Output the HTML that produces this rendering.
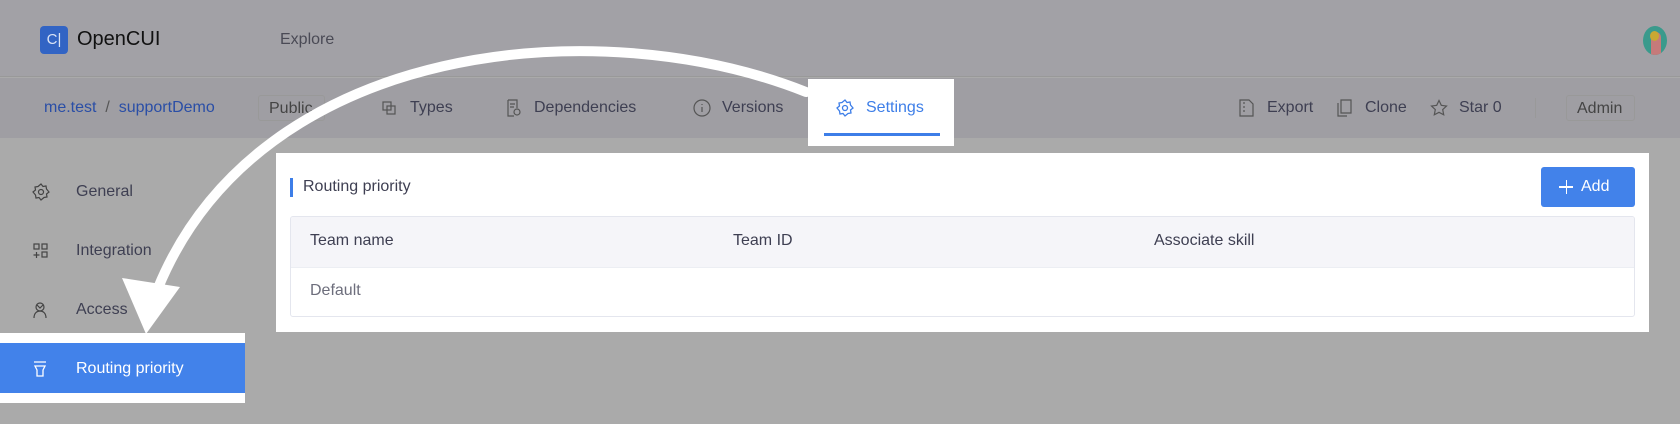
<!DOCTYPE html>
<html><head><meta charset="utf-8"><style>
*{margin:0;padding:0;box-sizing:border-box}
body{width:1680px;height:424px;overflow:hidden;background:#aaaaaa;font-family:"Liberation Sans",sans-serif;position:relative;color:#3e3f52}
.a{position:absolute;white-space:nowrap}
.top{position:absolute;left:0;top:0;width:1680px;height:77px;background:#a2a1a6;border-bottom:1px solid #999}
.sub{position:absolute;left:0;top:78px;width:1680px;height:60px;background:#9f9ea3}
.t16{font-size:16px;line-height:20px}
svg.i{position:absolute}
</style></head><body>
<div class="top"></div>
<div class="sub"></div>
<div class="a" style="left:40px;top:26px;width:28px;height:28px;background:#3264c4;border-radius:4px;color:#dbe4f5;font-size:15px;line-height:28px;text-align:center">C|</div>
<div class="a" style="left:77px;top:28px;font-size:20px;color:#111">OpenCUI</div>
<div class="a t16" style="left:280px;top:30px;color:#4a4a55">Explore</div>
<div class="a" style="left:1643px;top:26px;width:24px;height:29px;border-radius:50%;background:#3a9a8c;overflow:hidden"><div style="position:absolute;left:8px;top:6px;width:10px;height:23px;background:#c57a7a;border-radius:5px 5px 0 0"></div><div style="position:absolute;left:7px;top:5px;width:9px;height:10px;background:#c8a832;border-radius:50%"></div></div>

<div class="a t16" style="left:44px;top:98px;color:#2a4ea6">me.test &nbsp;<span style="color:#555">/</span>&nbsp; supportDemo</div>
<div class="a t16" style="left:258px;top:95px;width:67px;height:26px;border:1px solid #999;border-radius:3px;padding:3px 10px;color:#444">Public</div>
<svg class="i" style="left:381px;top:100px" width="16" height="16" viewBox="0 0 16 16" fill="none" stroke="#555" stroke-width="1.2"><rect x="2" y="2" width="8" height="8"/><rect x="6" y="6" width="8" height="8"/></svg>
<div class="a t16" style="left:410px;top:98px">Types</div>
<svg class="i" style="left:505px;top:99px" width="16" height="18" viewBox="0 0 16 18" fill="none" stroke="#555" stroke-width="1.2"><path d="M3 1h9v8M3 1v16h6M5 5h5M5 8h4"/><circle cx="12" cy="13" r="3"/></svg>
<div class="a t16" style="left:534px;top:98px">Dependencies</div>
<svg class="i" style="left:693px;top:99px" width="18" height="18" viewBox="0 0 18 18" fill="none" stroke="#555" stroke-width="1.2"><circle cx="9" cy="9" r="8"/><path d="M9 8v5M9 5v1"/></svg>
<div class="a t16" style="left:722px;top:98px">Versions</div>

<div class="a" style="left:808px;top:79px;width:146px;height:67px;background:#fff"></div>
<div class="a" style="left:824px;top:133px;width:116px;height:3px;background:#3d7ee8"></div>
<svg class="i" style="left:836px;top:99px" width="18" height="18" viewBox="0 0 18 18" fill="none" stroke="#3d7ee8" stroke-width="1.3"><path d="M9 1l2 2.5 3-.5.5 3L17 9l-2.5 2 .5 3-3 .5L9 17l-2-2.5-3 .5-.5-3L1 9l2.5-2L3 4l3-.5z"/><circle cx="9" cy="9" r="2.5"/></svg>
<div class="a t16" style="left:866px;top:98px;color:#3d7ee8">Settings</div>

<svg class="i" style="left:1239px;top:99px" width="15" height="18" viewBox="0 0 15 18" fill="none" stroke="#555" stroke-width="1.2"><path d="M1 1h9l4 4v12H1zM5 3v2M5 7v2M5 11v2"/></svg>
<div class="a t16" style="left:1267px;top:98px">Export</div>
<svg class="i" style="left:1337px;top:99px" width="15" height="18" viewBox="0 0 15 18" fill="none" stroke="#555" stroke-width="1.2"><path d="M4 1h10v13H4zM1 4v13h9"/></svg>
<div class="a t16" style="left:1365px;top:98px">Clone</div>
<svg class="i" style="left:1430px;top:99px" width="18" height="18" viewBox="0 0 18 18" fill="none" stroke="#555" stroke-width="1.2"><path d="M9 1.5l2.3 4.8 5.2.7-3.8 3.6 1 5.2L9 13.3l-4.7 2.5 1-5.2L1.5 7l5.2-.7z"/></svg>
<div class="a t16" style="left:1459px;top:98px">Star 0</div>
<div class="a" style="left:1535px;top:98px;width:1px;height:20px;background:#999"></div>
<div class="a t16" style="left:1566px;top:95px;width:69px;height:26px;border:1px solid #999;border-radius:3px;padding:3px 10px;color:#444">Admin</div>

<svg class="i" style="left:32px;top:183px" width="18" height="18" viewBox="0 0 18 18" fill="none" stroke="#444" stroke-width="1.2"><path d="M9 1l2 2.5 3-.5.5 3L17 9l-2.5 2 .5 3-3 .5L9 17l-2-2.5-3 .5-.5-3L1 9l2.5-2L3 4l3-.5z"/><circle cx="9" cy="9" r="2.5"/></svg>
<div class="a t16" style="left:76px;top:182px">General</div>
<svg class="i" style="left:32px;top:242px" width="18" height="18" viewBox="0 0 18 18" fill="none" stroke="#444" stroke-width="1.2"><rect x="2" y="2" width="5" height="5"/><rect x="10" y="2" width="5" height="5"/><rect x="10" y="10" width="5" height="5"/><path d="M4.5 10v6M1.5 13h6"/></svg>
<div class="a t16" style="left:76px;top:241px">Integration</div>
<svg class="i" style="left:32px;top:301px" width="18" height="18" viewBox="0 0 18 18" fill="none" stroke="#444" stroke-width="1.2"><circle cx="8" cy="6" r="4"/><path d="M2 17c0-5 3-7 6-7s6 2 6 7M5 4l3 3 3-3"/></svg>
<div class="a t16" style="left:76px;top:300px">Access</div>

<div class="a" style="left:0;top:333px;width:245px;height:70px;background:#fff"></div>
<div class="a" style="left:0;top:343px;width:245px;height:50px;background:#4282ea"></div>
<svg class="i" style="left:32px;top:360px" width="16" height="18" viewBox="0 0 16 18" fill="none" stroke="#fff" stroke-width="1.3"><path d="M2 2h12M3 6h10l-2 4v6H5v-6z"/></svg>
<div class="a t16" style="left:76px;top:359px;color:#fff">Routing priority</div>

<div class="a" style="left:276px;top:153px;width:1373px;height:179px;background:#fff"></div>
<div class="a" style="left:290px;top:178px;width:3px;height:19px;background:#3d7ee8"></div>
<div class="a t16" style="left:303px;top:177px">Routing priority</div>
<div class="a" style="left:1541px;top:167px;width:94px;height:40px;background:#4282ea;border-radius:3px;color:#fff;font-size:16px;line-height:40px;padding-left:40px">Add</div>
<div class="a" style="left:1559px;top:186px;width:14px;height:1.5px;background:#fff"></div>
<div class="a" style="left:1565.5px;top:180px;width:1.5px;height:14px;background:#fff"></div>
<div class="a" style="left:290px;top:216px;width:1345px;height:101px;border:1px solid #e4e6ee;border-radius:3px;overflow:hidden">
<div style="height:51px;background:#f5f5f9;border-bottom:1px solid #eceef3"></div></div>
<div class="a t16" style="left:310px;top:231px">Team name</div>
<div class="a t16" style="left:733px;top:231px">Team ID</div>
<div class="a t16" style="left:1154px;top:231px">Associate skill</div>
<div class="a t16" style="left:310px;top:281px;color:#6d6e7c">Default</div>

<svg class="i" style="left:0;top:0" width="1680" height="424" viewBox="0 0 1680 424">
<path d="M806 92 C600 10 260 40 158 288" fill="none" stroke="#fff" stroke-width="10" stroke-linecap="round"/>
<polygon points="122,278 180,287 146,334" fill="#fff"/>
</svg>
</body></html>
